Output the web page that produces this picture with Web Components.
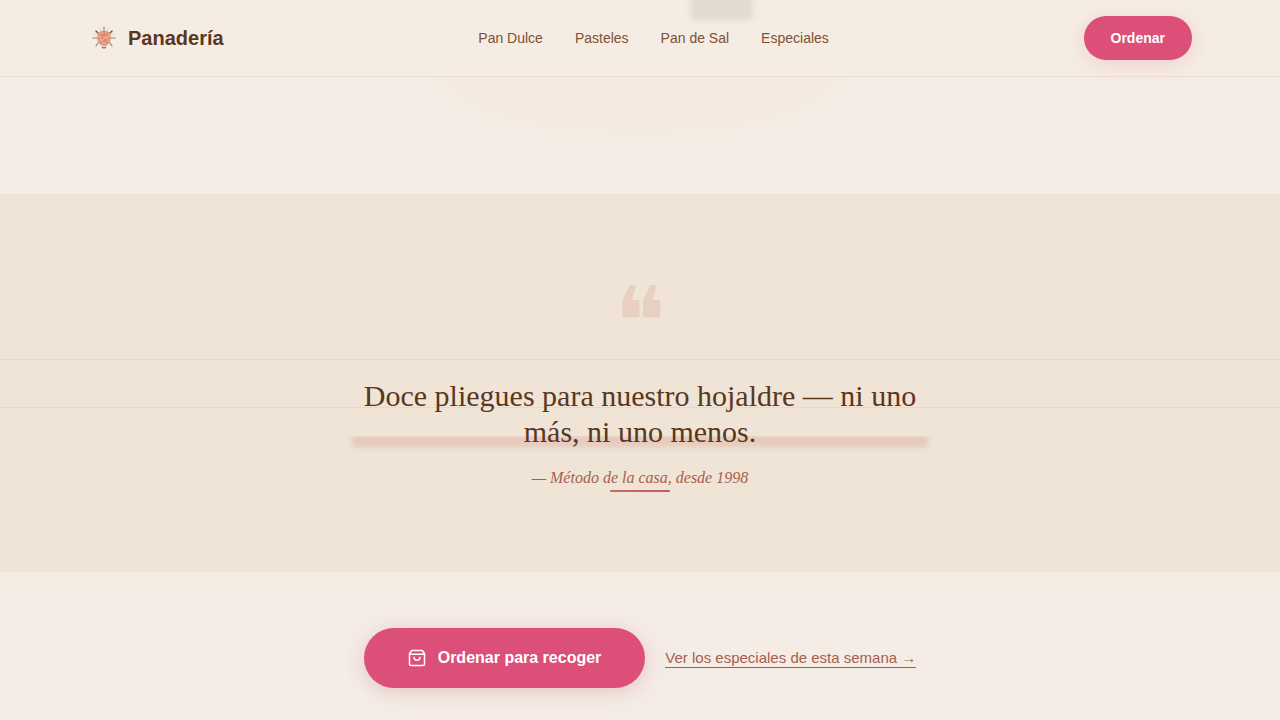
<!DOCTYPE html>
<html lang="es">
<head>
<meta charset="utf-8">
<meta name="viewport" content="width=device-width, initial-scale=1">
<title>Panadería</title>
<style>
  :root {
    --crema: #f5ede3;
    --harina: #f5ece6;
    --masa: #efe4d5;
    --corteza: #5a371d;
    --canela: #7d5036;
    --barro: #a65f4e;
    --rosa: #db4f78;
    --sans: "Liberation Sans", Arial, sans-serif;
    --serif: "Liberation Serif", "Times New Roman", serif;
  }
  body { margin: 0; background: var(--harina); color: var(--corteza); font-family: var(--sans); }
</style>
</head>
<body>
<pan-header>
  <pan-logo slot="brand">Panadería</pan-logo>
  <pan-link href="#dulce">Pan Dulce</pan-link>
  <pan-link href="#pasteles">Pasteles</pan-link>
  <pan-link href="#sal">Pan de Sal</pan-link>
  <pan-link href="#especiales">Especiales</pan-link>
  <pan-button slot="action">Ordenar</pan-button>
</pan-header>
<main>
  <pan-hero></pan-hero>
  <pan-quote>
    Doce pliegues para nuestro hojaldre — ni uno más, ni uno menos.
    <span slot="cite">— Método de la casa, desde 1998</span>
  </pan-quote>
  <pan-actions>
    <pan-button size="large">
      <svg slot="icon" width="18" height="18" viewBox="0 0 24 24" fill="none" stroke="currentColor" stroke-width="2" stroke-linecap="round" stroke-linejoin="round" aria-hidden="true"><path d="M5 2 2 6v14a2 2 0 0 0 2 2h16a2 2 0 0 0 2-2V6l-3-4zM2 7h20M16 11a4 4 0 0 1-8 0"/></svg>
      Ordenar para recoger
    </pan-button>
    <pan-link variant="underlined" href="#especiales">Ver los especiales de esta semana →</pan-link>
  </pan-actions>
</main>
<script>
  class PanElement extends HTMLElement {
    constructor() {
      super();
      this.attachShadow({ mode: 'open' }).innerHTML = this.constructor.markup;
    }
  }

  customElements.define('pan-header', class extends PanElement {
    static markup = `
      <style>
        :host { display: block; position: relative; z-index: 2; background: var(--crema); border-bottom: 1px solid #ebe0d3; }
        .glow { position: absolute; inset: 0; overflow: hidden; }
        .glow::before { content: ""; position: absolute; left: 54%; top: -40px; width: 62px; height: 60px; background: #e2d9cf; filter: blur(3px); }
        header { position: relative; display: flex; align-items: center; justify-content: space-between; max-width: 1104px; margin: 0 auto; padding: 16px 24px; }
        nav { display: flex; gap: 32px; }
      </style>
      <div class="glow"></div>
      <header>
        <slot name="brand"></slot>
        <nav aria-label="Principal"><slot></slot></nav>
        <slot name="action"></slot>
      </header>`;
  });

  customElements.define('pan-logo', class extends PanElement {
    static markup = `
      <style>
        :host { display: block; }
        a { display: flex; align-items: center; gap: 8px; color: var(--corteza); font: bold 20px/24px var(--sans); text-decoration: none; }
      </style>
      <a href="#inicio">
        <svg width="32" height="32" viewBox="0 0 32 32" fill="none" aria-hidden="true">
          <g stroke="#a08572" stroke-width="1.2" stroke-linecap="round">
            <path d="M16 5v5M5 16h5M22 16h5M10 21l-2 3M22 21l2 3"/>
            <path d="M8 9l3 3M24 9l-3 3" stroke="#7c5540" stroke-width="1.5"/>
            <path d="M12 6l1 3M20 6l-1 3M6 12l4 1M26 12l-4 1" stroke="#e0d2c2" stroke-width="1"/>
          </g>
          <path d="M10 11l3-2h6l3 2 1 5-1 5-4 3h-4l-4-3-1-5z" fill="#e5a084"/>
          <path d="M11 12l4 2 5-3M10 17l4-1 3 2 5-2M12 21l4-3 4 3M16 9v5" stroke="#d67c64" stroke-width="1"/>
          <path d="M12 15l2 4 4-4 2 3" stroke="#efb9a3" stroke-width="1"/>
          <path d="M14 25q2 2 4 0" stroke="#c4605a" stroke-width="1.2"/>
        </svg>
        <slot></slot>
      </a>`;
  });

  customElements.define('pan-link', class extends PanElement {
    static markup = `
      <style>
        :host { display: block; }
        a { display: block; color: var(--canela); font: 14px/20px var(--sans); text-decoration: none; }
        :host([variant="underlined"]) a { color: var(--barro); font-size: 15px; line-height: 18px; border-bottom: 1px solid currentColor; }
      </style>
      <a><slot></slot></a>`;
    connectedCallback() {
      this.shadowRoot.querySelector('a').href = this.getAttribute('href');
    }
  });

  customElements.define('pan-button', class extends PanElement {
    static markup = `
      <style>
        :host { display: block; }
        button { display: flex; align-items: center; gap: 12px; height: 44px; padding: 0 27px; border: 0; border-radius: 30px; background: var(--rosa); color: #fff; font: bold 14px/20px var(--sans); box-shadow: 0 4px 20px rgb(219 79 120 / .18); cursor: pointer; }
        :host([size="large"]) button { height: 60px; padding: 0 44px; font-size: 16px; box-shadow: 0 4px 20px rgb(190 80 80 / .24); }
        ::slotted(svg) { display: block; }
      </style>
      <button type="button"><slot name="icon"></slot><span><slot></slot></span></button>`;
  });

  customElements.define('pan-hero', class extends PanElement {
    static markup = `
      <style>
        :host { display: block; height: 117px; background: radial-gradient(ellipse 240px 70px at 50% 0, #f4eadf 60%, transparent 100%); }
      </style>`;
  });

  customElements.define('pan-quote', class extends PanElement {
    static markup = `
      <style>
        :host { display: block; position: relative; background: var(--masa); }
        .folds { position: absolute; box-sizing: border-box; inset: 165px 0 auto; height: 49px; border-block: 1px solid #e7dacb; }
        figure { position: relative; box-sizing: border-box; max-width: 576px; margin: 0 auto; padding: 80px 0; text-align: center; }
        .mark { height: 104px; color: #e8cfc2; font: 96px/96px "DejaVu Sans", sans-serif; }
        blockquote { position: relative; isolation: isolate; margin: 0; font: 30px/36px var(--serif); }
        blockquote::after { content: ""; position: absolute; z-index: -1; inset: auto 0 2px; height: 12px; background: linear-gradient(#e3c6ba, #e8d1c4); filter: blur(2px); clip-path: inset(0 -6px -6px); }
        figcaption { padding: 16px 0 0; color: var(--barro); font: italic 16px/24px var(--serif); }
        figcaption::after { content: ""; display: block; width: 60px; height: 2px; margin: 0 auto; border-radius: 1px; background: linear-gradient(90deg, #c96a60, #cb5475); }
      </style>
      <div class="folds"></div>
      <figure>
        <div class="mark" aria-hidden="true">❝</div>
        <blockquote><slot></slot></blockquote>
        <figcaption><slot name="cite"></slot></figcaption>
      </figure>`;
  });

  customElements.define('pan-actions', class extends PanElement {
    static markup = `
      <style>
        :host { display: flex; flex-wrap: wrap; align-items: center; justify-content: center; gap: 20px; padding: 56px 24px 32px; background: linear-gradient(#f5ede2, var(--harina) 32px); }
      </style>
      <slot></slot>`;
  });
</script>
</body>
</html>
